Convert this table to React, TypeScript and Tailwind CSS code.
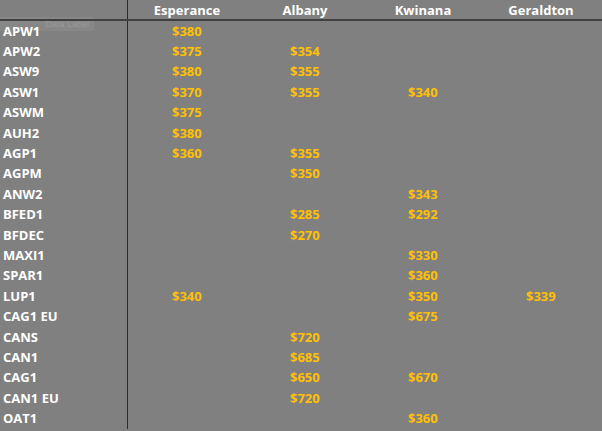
const ports = ["Esperance", "Albany", "Kwinana", "Geraldton"];

// prices per grade: [Esperance, Albany, Kwinana, Geraldton]
const rows: [string, (number | null)[]][] = [
  ["APW1", [380, null, null, null]],
  ["APW2", [375, 354, null, null]],
  ["ASW9", [380, 355, null, null]],
  ["ASW1", [370, 355, 340, null]],
  ["ASWM", [375, null, null, null]],
  ["AUH2", [380, null, null, null]],
  ["AGP1", [360, 355, null, null]],
  ["AGPM", [null, 350, null, null]],
  ["ANW2", [null, null, 343, null]],
  ["BFED1", [null, 285, 292, null]],
  ["BFDEC", [null, 270, null, null]],
  ["MAXI1", [null, null, 330, null]],
  ["SPAR1", [null, null, 360, null]],
  ["LUP1", [340, null, 350, 339]],
  ["CAG1 EU", [null, null, 675, null]],
  ["CANS", [null, 720, null, null]],
  ["CAN1", [null, 685, null, null]],
  ["CAG1", [null, 650, 670, null]],
  ["CAN1 EU", [null, 720, null, null]],
  ["OAT1", [null, null, 360, null]],
];

export default function App() {
  return (
    <div className="relative w-[602px] h-[431px] overflow-hidden bg-[#808080] font-['Open_Sans',sans-serif] font-bold text-[13px] leading-none">
      {/* faint leftover data-label box behind the first row */}
      <div className="absolute left-0 top-[17px] w-[94px] h-[14px] bg-[#878787] flex items-center justify-end pr-[5px] whitespace-nowrap text-[9px] font-normal text-[#999999] font-['Liberation_Sans',sans-serif]">
        Data Label
      </div>

      <div className="relative flex h-[21px] border-b-2 border-[#404040]">
        <div className="w-[128px] shrink-0 border-r border-[#2a2a2a]" />
        {ports.map((p) => (
          <div key={p} className="w-[118px] shrink-0 flex items-center justify-center text-white pt-[1px]">
            {p}
          </div>
        ))}
      </div>

      {rows.map(([grade, prices]) => (
        <div key={grade} className="relative flex h-[20.4px]">
          <div className="w-[128px] shrink-0 border-r border-[#2a2a2a] pl-[3px] flex items-center text-white">
            {grade}
          </div>
          {prices.map((v, i) => (
            <div key={i} className="w-[118px] shrink-0 pl-[44px] flex items-center text-[#ffc000]">
              {v !== null ? `$${v}` : ""}
            </div>
          ))}
        </div>
      ))}
    </div>
  );
}
